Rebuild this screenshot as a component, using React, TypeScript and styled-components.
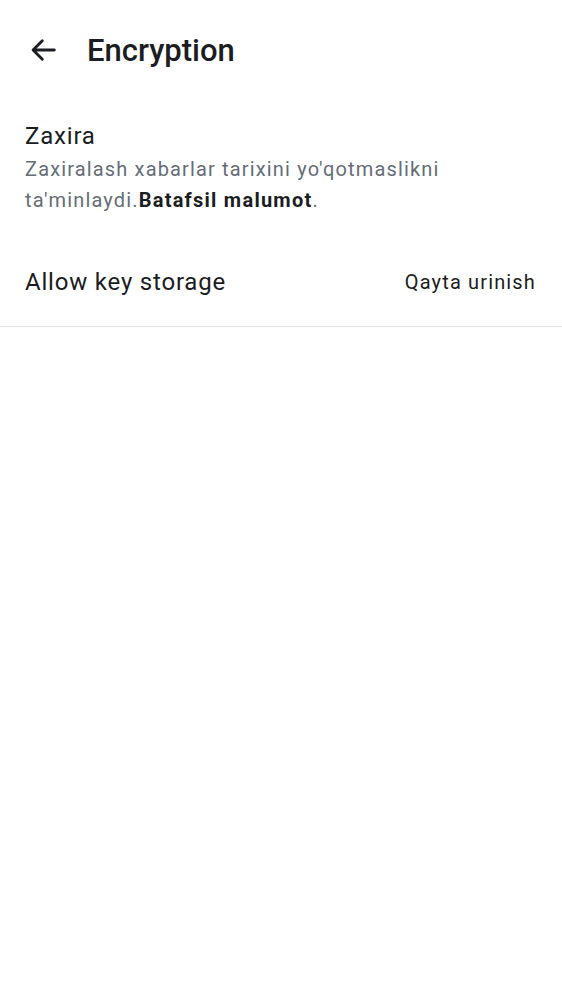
import * as React from 'react'
import styled, { createGlobalStyle } from 'styled-components'

const GlobalStyle = createGlobalStyle`
  html, body {
    margin: 0;
    padding: 0;
    background: #ffffff;
    font-family: Roboto, "Noto Sans", sans-serif;
    color: #1b1d22;
  }
`

const Screen = styled.div`
  width: 562px;
  min-height: 1000px;
  background: #ffffff;
`

const TopBar = styled.header`
  display: flex;
  align-items: center;
  height: 100px;
  padding: 0 0 0 26px;
  box-sizing: border-box;
`

const BackButton = styled.button`
  display: flex;
  align-items: center;
  justify-content: center;
  width: 34px;
  height: 34px;
  padding: 0;
  border: 0;
  background: transparent;
  color: #1b1d22;
  cursor: pointer;
`

const Title = styled.h1`
  margin: 0 0 0 27px;
  font-size: 31px;
  font-weight: 500;
  letter-spacing: 0;
  color: #1b1d22;
`

const Section = styled.section`
  padding: 18px 25px 0;
`

const SectionTitle = styled.div`
  font-size: 24px;
  line-height: 36px;
  letter-spacing: 0.8px;
  color: #1b1d22;
`

const SectionText = styled.p`
  margin: 0;
  font-size: 20px;
  line-height: 31px;
  letter-spacing: 1.15px;
  color: #656d77;

  b {
    font-weight: 700;
    letter-spacing: 1.25px;
    color: #1b1d22;
  }
`

const Row = styled.div`
  display: flex;
  align-items: center;
  justify-content: space-between;
  height: 88px;
  margin-top: 22px;
  padding: 0 26px 0 25px;
  border-bottom: 1px solid #e6e7ec;
`

const RowLabel = styled.span`
  font-size: 24px;
  letter-spacing: 0.8px;
  color: #1b1d22;
`

const RowAction = styled.button`
  border: 0;
  background: transparent;
  padding: 0;
  font-family: inherit;
  font-size: 20px;
  letter-spacing: 1.15px;
  color: #1b1d22;
  cursor: pointer;
`

const BackIcon = () => (
  <svg width="34" height="34" viewBox="0 0 24 24" fill="none">
    <path
      d="M20 12H5M11.5 5.5L5 12l6.5 6.5"
      stroke="currentColor"
      strokeWidth="2"
      strokeLinecap="round"
      strokeLinejoin="round"
    />
  </svg>
)

const App: React.FC = () => (
  <React.Fragment>
    <GlobalStyle />
    <Screen>
      <TopBar>
        <BackButton aria-label="Back">
          <BackIcon />
        </BackButton>
        <Title>Encryption</Title>
      </TopBar>
      <Section>
        <SectionTitle>Zaxira</SectionTitle>
        <SectionText>
          Zaxiralash xabarlar tarixini yo'qotmaslikni ta'minlaydi.
          <b>Batafsil malumot</b>.
        </SectionText>
      </Section>
      <Row>
        <RowLabel>Allow key storage</RowLabel>
        <RowAction>Qayta urinish</RowAction>
      </Row>
    </Screen>
  </React.Fragment>
)

export default App
